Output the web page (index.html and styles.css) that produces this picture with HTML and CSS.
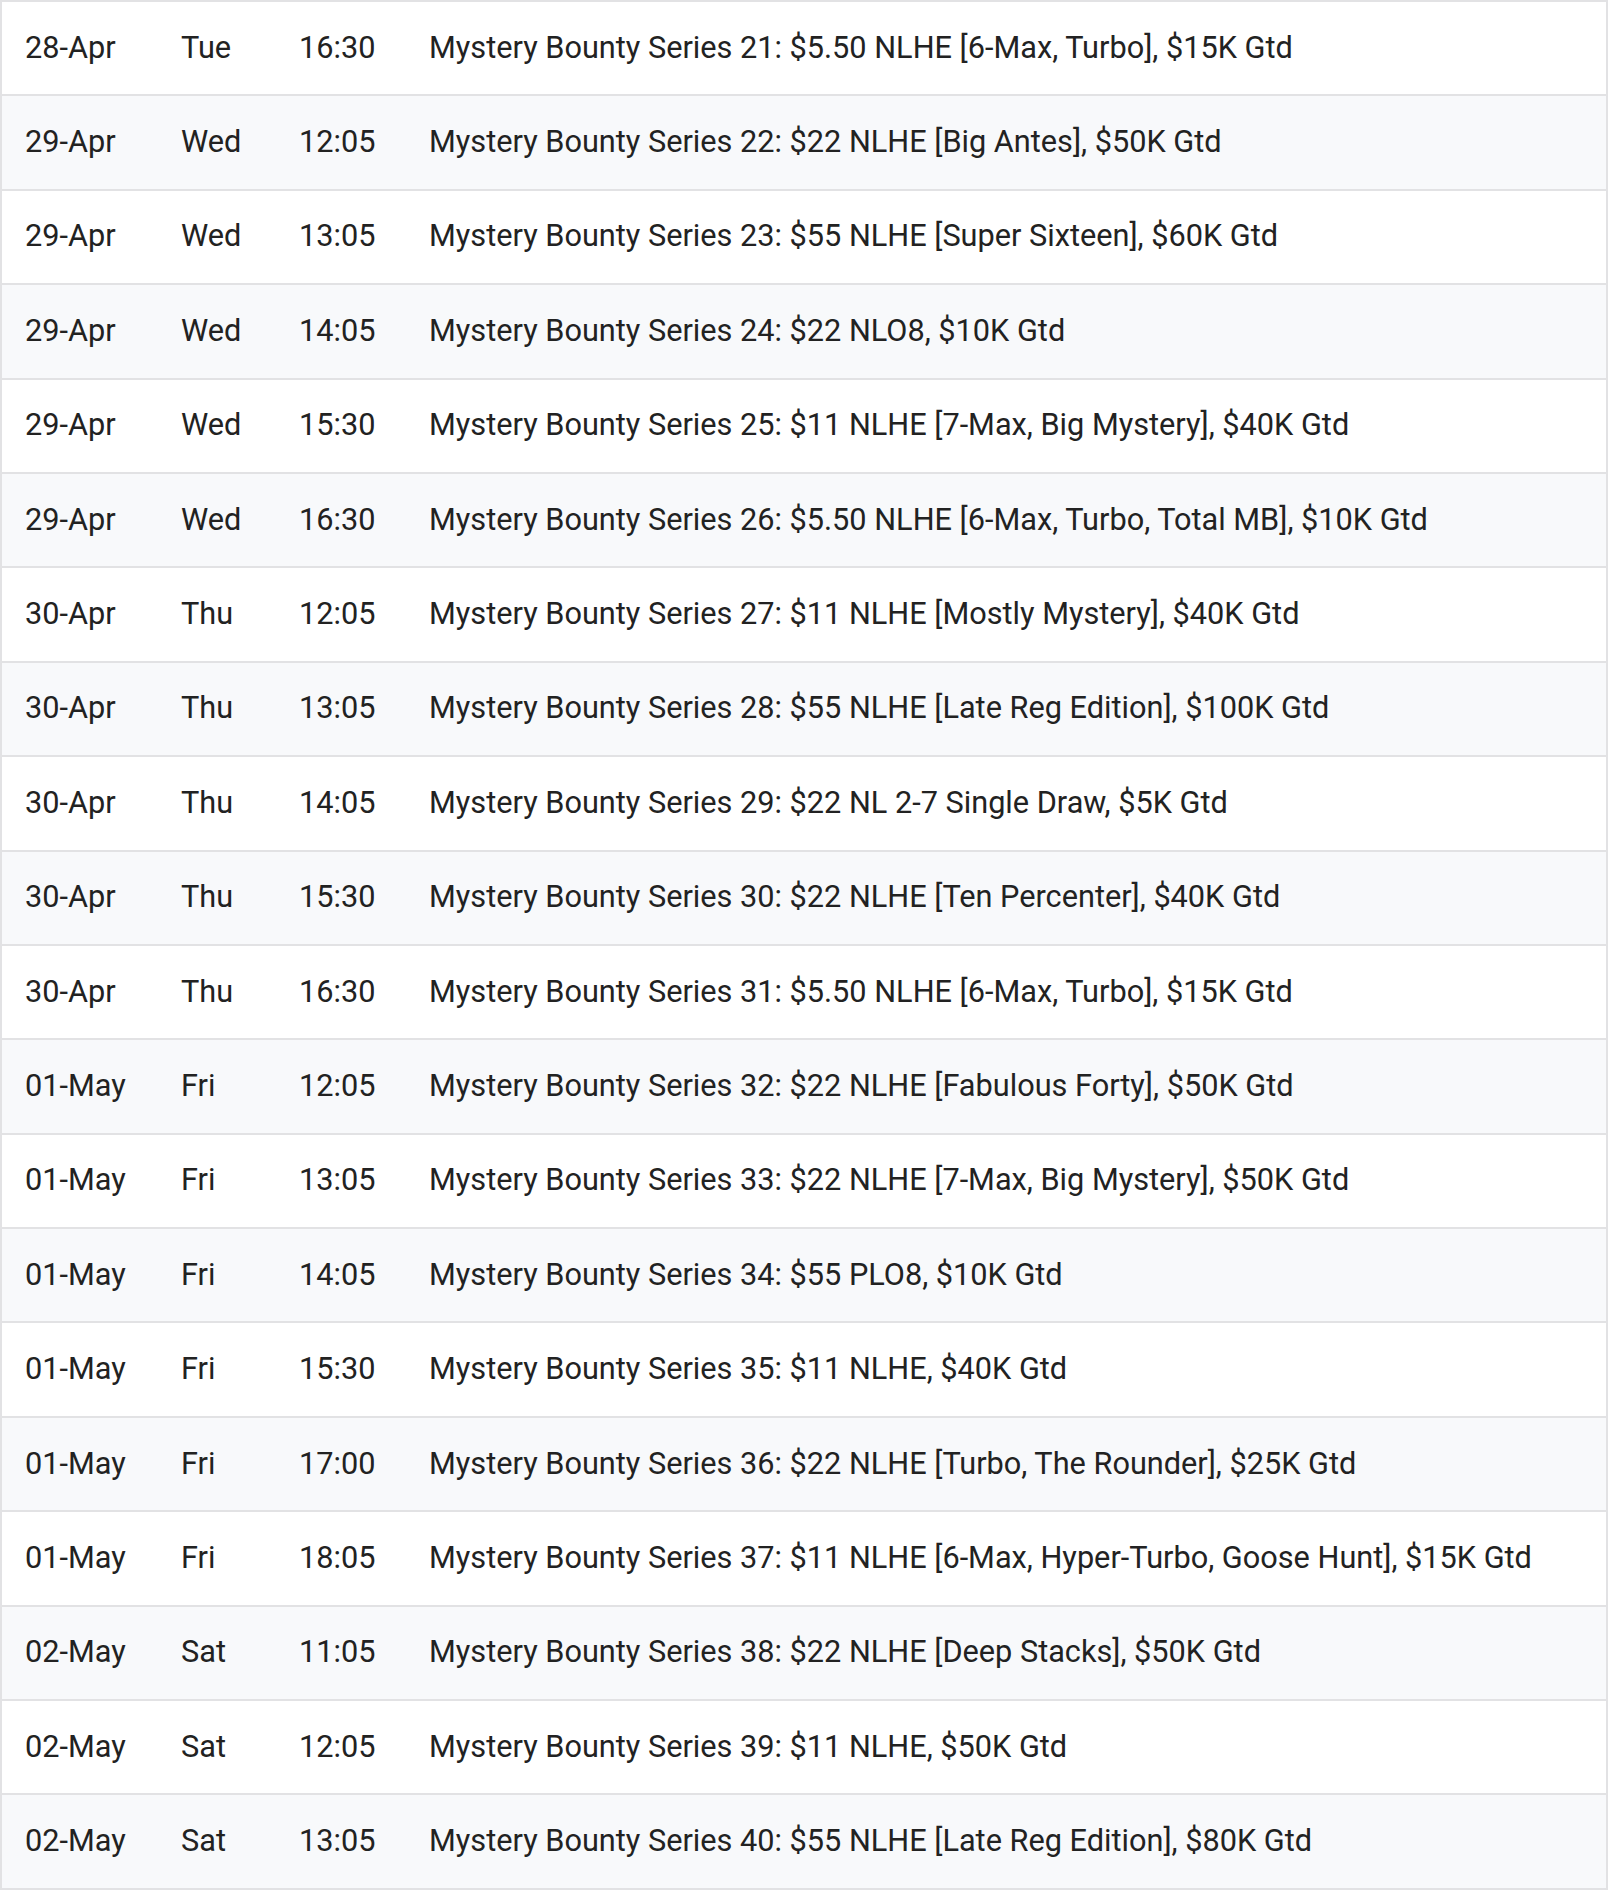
FILE: index.html
```html
<!DOCTYPE html>
<html>
<head>
<meta charset="utf-8">
<link rel="stylesheet" href="styles.css">
</head>
<body>
<table class="schedule">
<colgroup>
<col class="c-date"><col class="c-day"><col class="c-time"><col class="c-event">
</colgroup>
<tbody>
<tr><td>28-Apr</td><td>Tue</td><td>16:30</td><td>Mystery Bounty Series 21: $5.50 NLHE [6-Max, Turbo], $15K Gtd</td></tr>
<tr><td>29-Apr</td><td>Wed</td><td>12:05</td><td>Mystery Bounty Series 22: $22 NLHE [Big Antes], $50K Gtd</td></tr>
<tr><td>29-Apr</td><td>Wed</td><td>13:05</td><td>Mystery Bounty Series 23: $55 NLHE [Super Sixteen], $60K Gtd</td></tr>
<tr><td>29-Apr</td><td>Wed</td><td>14:05</td><td>Mystery Bounty Series 24: $22 NLO8, $10K Gtd</td></tr>
<tr><td>29-Apr</td><td>Wed</td><td>15:30</td><td>Mystery Bounty Series 25: $11 NLHE [7-Max, Big Mystery], $40K Gtd</td></tr>
<tr><td>29-Apr</td><td>Wed</td><td>16:30</td><td>Mystery Bounty Series 26: $5.50 NLHE [6-Max, Turbo, Total MB], $10K Gtd</td></tr>
<tr><td>30-Apr</td><td>Thu</td><td>12:05</td><td>Mystery Bounty Series 27: $11 NLHE [Mostly Mystery], $40K Gtd</td></tr>
<tr><td>30-Apr</td><td>Thu</td><td>13:05</td><td>Mystery Bounty Series 28: $55 NLHE [Late Reg Edition], $100K Gtd</td></tr>
<tr><td>30-Apr</td><td>Thu</td><td>14:05</td><td>Mystery Bounty Series 29: $22 NL 2-7 Single Draw, $5K Gtd</td></tr>
<tr><td>30-Apr</td><td>Thu</td><td>15:30</td><td>Mystery Bounty Series 30: $22 NLHE [Ten Percenter], $40K Gtd</td></tr>
<tr><td>30-Apr</td><td>Thu</td><td>16:30</td><td>Mystery Bounty Series 31: $5.50 NLHE [6-Max, Turbo], $15K Gtd</td></tr>
<tr><td>01-May</td><td>Fri</td><td>12:05</td><td>Mystery Bounty Series 32: $22 NLHE [Fabulous Forty], $50K Gtd</td></tr>
<tr><td>01-May</td><td>Fri</td><td>13:05</td><td>Mystery Bounty Series 33: $22 NLHE [7-Max, Big Mystery], $50K Gtd</td></tr>
<tr><td>01-May</td><td>Fri</td><td>14:05</td><td>Mystery Bounty Series 34: $55 PLO8, $10K Gtd</td></tr>
<tr><td>01-May</td><td>Fri</td><td>15:30</td><td>Mystery Bounty Series 35: $11 NLHE, $40K Gtd</td></tr>
<tr><td>01-May</td><td>Fri</td><td>17:00</td><td>Mystery Bounty Series 36: $22 NLHE [Turbo, The Rounder], $25K Gtd</td></tr>
<tr><td>01-May</td><td>Fri</td><td>18:05</td><td>Mystery Bounty Series 37: $11 NLHE [6-Max, Hyper-Turbo, Goose Hunt], $15K Gtd</td></tr>
<tr><td>02-May</td><td>Sat</td><td>11:05</td><td>Mystery Bounty Series 38: $22 NLHE [Deep Stacks], $50K Gtd</td></tr>
<tr><td>02-May</td><td>Sat</td><td>12:05</td><td>Mystery Bounty Series 39: $11 NLHE, $50K Gtd</td></tr>
<tr><td>02-May</td><td>Sat</td><td>13:05</td><td>Mystery Bounty Series 40: $55 NLHE [Late Reg Edition], $80K Gtd</td></tr>
</tbody>
</table>
</body>
</html>
```

FILE: styles.css
```css
html, body {
  margin: 0;
  padding: 0;
  background: #ffffff;
}

.schedule {
  width: 1608px;
  table-layout: fixed;
  border-collapse: collapse;
  font-family: Roboto, "Liberation Sans", sans-serif;
  font-size: 30.7px;
  color: #222222;
}

.c-date { width: 158px; }
.c-day { width: 118px; }
.c-time { width: 130px; }

.schedule td {
  border-top: 2px solid #e2e2e4;
  border-bottom: 2px solid #e2e2e4;
  height: 94.4px;
  padding: 0 0 2px 22px;
  vertical-align: middle;
  white-space: nowrap;
  box-sizing: border-box;
}

.schedule tr td:first-child {
  border-left: 2px solid #e2e2e4;
  padding-left: 23px;
}

.schedule tr td:last-child {
  border-right: 2px solid #e2e2e4;
}

.schedule tr:nth-child(even) td {
  background: #f8f9fb;
}
```
